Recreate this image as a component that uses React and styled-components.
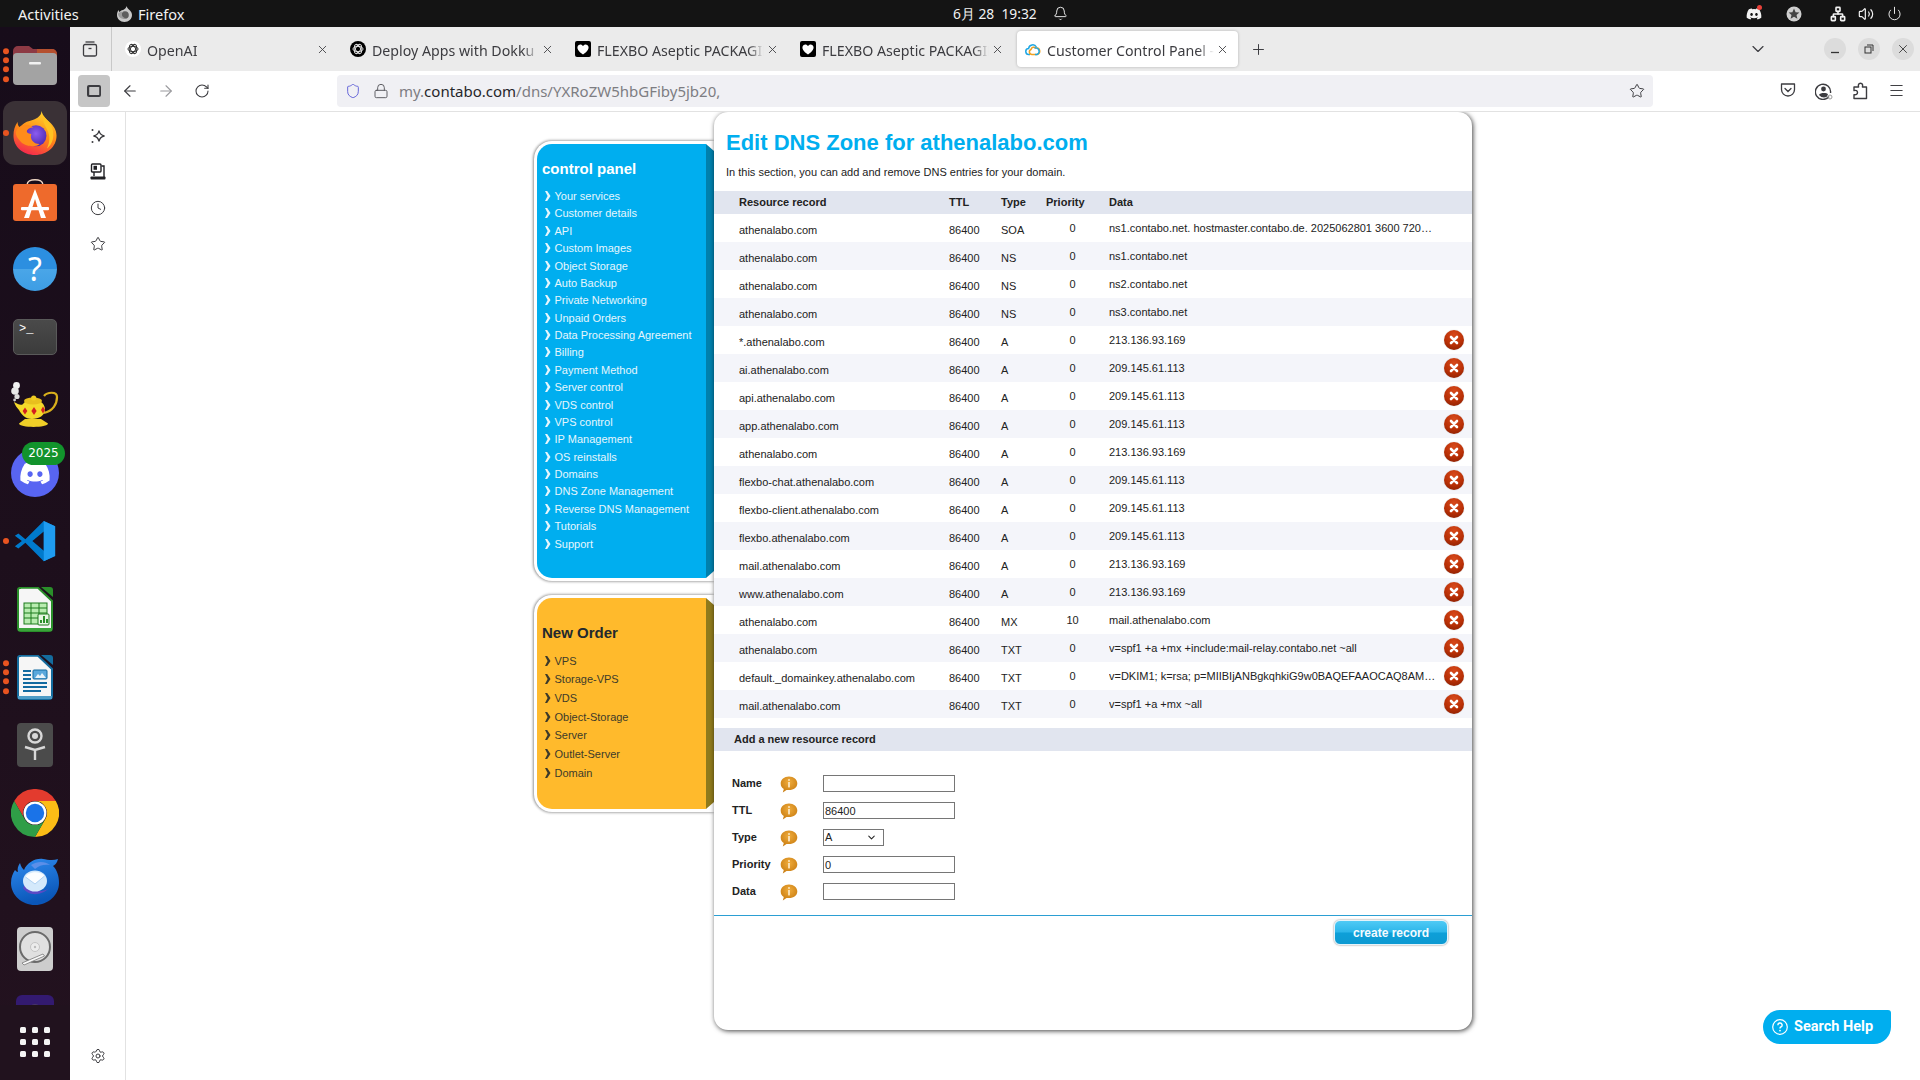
import React from 'react'
import styled, { createGlobalStyle } from 'styled-components'
import {
  ArrowLeft, ArrowRight, RotateCw, Star, Lock, ChevronDown, X, Plus, Menu,
  Clock, Settings, Bell, Power, Volume2, Network, Shield,
} from 'lucide-react'
import { FaDiscord } from 'react-icons/fa'

const SPF = 'v=spf1 +a +mx +include:mail-relay.contabo.net ~all'
const DKIM = 'v=DKIM1; k=rsa; p=MIIBIjANBgkqhkiG9w0BAQEFAAOCAQ8AMIIBCgKCAQEAu5x'
const SOA = 'ns1.contabo.net. hostmaster.contabo.de. 2025062801 3600 7200 1209600 86400'

const RECORDS = [
  ['athenalabo.com', 'SOA', '0', SOA, false],
  ['athenalabo.com', 'NS', '0', 'ns1.contabo.net', false],
  ['athenalabo.com', 'NS', '0', 'ns2.contabo.net', false],
  ['athenalabo.com', 'NS', '0', 'ns3.contabo.net', false],
  ['*.athenalabo.com', 'A', '0', '213.136.93.169', true],
  ['ai.athenalabo.com', 'A', '0', '209.145.61.113', true],
  ['api.athenalabo.com', 'A', '0', '209.145.61.113', true],
  ['app.athenalabo.com', 'A', '0', '209.145.61.113', true],
  ['athenalabo.com', 'A', '0', '213.136.93.169', true],
  ['flexbo-chat.athenalabo.com', 'A', '0', '209.145.61.113', true],
  ['flexbo-client.athenalabo.com', 'A', '0', '209.145.61.113', true],
  ['flexbo.athenalabo.com', 'A', '0', '209.145.61.113', true],
  ['mail.athenalabo.com', 'A', '0', '213.136.93.169', true],
  ['www.athenalabo.com', 'A', '0', '213.136.93.169', true],
  ['athenalabo.com', 'MX', '10', 'mail.athenalabo.com', true],
  ['athenalabo.com', 'TXT', '0', SPF, true],
  ['default._domainkey.athenalabo.com', 'TXT', '0', DKIM, true],
  ['mail.athenalabo.com', 'TXT', '0', 'v=spf1 +a +mx ~all', true],
]

const CONTROL_ITEMS = ['Your services', 'Customer details', 'API', 'Custom Images', 'Object Storage', 'Auto Backup',
  'Private Networking', 'Unpaid Orders', 'Data Processing Agreement', 'Billing', 'Payment Method', 'Server control',
  'VDS control', 'VPS control', 'IP Management', 'OS reinstalls', 'Domains', 'DNS Zone Management',
  'Reverse DNS Management', 'Tutorials', 'Support']
const ORDER_ITEMS = ['VPS', 'Storage-VPS', 'VDS', 'Object-Storage', 'Server', 'Outlet-Server', 'Domain']

const GlobalStyle = createGlobalStyle`
  html, body { margin: 0; padding: 0; height: 100%; overflow: hidden; background: #fff; }
  * { box-sizing: border-box; }
`

const Screen = styled.div`
  width: 1920px;
  height: 1080px;
  display: flex;
  flex-direction: column;
  overflow: hidden;
  font-family: "Liberation Sans", Arial, sans-serif;
  position: relative;
`

/* gnome top bar */
const TopBar = styled.div`
  height: 27px;
  flex-shrink: 0;
  background: #141414;
  color: #f2f2f2;
  display: flex;
  align-items: center;
  font-family: "Noto Sans", sans-serif;
  font-size: 14.6px;
  padding-right: 18px;
`
const BarLeft = styled.div`
  width: 953px;
  display: flex;
  align-items: center;
  padding-left: 18px;
`
const Activities = styled.span`
  width: 99px;
`
const AppName = styled.span`
  margin-left: 6px;
`
const ClockText = styled.span`
  font-size: 13.8px;
  white-space: pre;
`
const BellWrap = styled.span`
  display: flex;
  margin-left: 16px;
`
const Tray = styled.div`
  margin-left: auto;
  display: flex;
  align-items: center;
`
const TrayIcon = styled.span`
  width: 16px;
  height: 16px;
  display: flex;
  align-items: center;
  justify-content: center;
  margin-left: ${p => p.$gap || 0}px;
  position: relative;
`
const TrayDot = styled.span`
  position: absolute;
  top: -1px;
  right: 0;
  width: 5px;
  height: 5px;
  border-radius: 50%;
  background: #e8413a;
`

const Desktop = styled.div`
  flex: 1;
  display: flex;
  min-height: 0;
`

/* ubuntu dock */
const Dock = styled.div`
  width: 70px;
  flex-shrink: 0;
  background: linear-gradient(180deg, #170c1a 0%, #1d0f1c 50%, #23121f 100%);
  display: flex;
  flex-direction: column;
  align-items: center;
  padding-top: 4px;
  overflow: hidden;
  position: relative;
`
const DockItem = styled.div`
  width: 64px;
  flex-shrink: 0;
  display: flex;
  align-items: center;
  justify-content: center;
  border-radius: 12px;
  position: relative;
  background: ${p => (p.$active ? '#3a3136' : 'transparent')};
  margin-top: ${p => (p.$active ? '2px' : '0')};
  margin-bottom: ${p => (p.$active ? '2px' : '0')};
  height: ${p => (p.$active ? '64px' : '68px')};
`
const RunDots = styled.div`
  position: absolute;
  left: 0;
  top: 50%;
  transform: translateY(-50%);
  display: flex;
  flex-direction: column;
  gap: 3.2px;
`
const RunDot = styled.span`
  width: 6px;
  height: 6px;
  border-radius: 50%;
  background: #e95420;
`
const HelpBadge = styled.div`
  width: 44px;
  height: 44px;
  border-radius: 50%;
  background: linear-gradient(180deg, #2c8fe0 0%, #2c8fe0 50%, #4aa6e8 50%, #3d9de4 100%);
  color: #fff;
  font-family: "Noto Sans", sans-serif;
  font-size: 32px;
  line-height: 44px;
  text-align: center;
`
const TerminalTile = styled.div`
  width: 44px;
  height: 36px;
  border-radius: 5px;
  background: linear-gradient(180deg, #4a4a4a, #3b3b3b);
  border: 1px solid #5a5a5a;
  color: #fff;
  font-family: "Liberation Mono", monospace;
  font-size: 12px;
  line-height: 14px;
  padding: 2px 0 0 5px;
`
const DiscordDisc = styled.div`
  width: 48px;
  height: 48px;
  border-radius: 50%;
  background: #5865f2;
  color: #fff;
  display: flex;
  align-items: center;
  justify-content: center;
  position: relative;
`
const YearBadge = styled.span`
  position: absolute;
  left: 11px;
  top: -7px;
  width: 43px;
  height: 23px;
  border-radius: 12px;
  background: #12932c;
  color: #fff;
  font-family: "DejaVu Sans", sans-serif;
  font-size: 12px;
  line-height: 23px;
  text-align: center;
`
const AppsGrid = styled.div`
  position: absolute;
  left: 0;
  bottom: 0;
  width: 70px;
  height: 75px;
  background: #21121e;
  display: grid;
  grid-template-columns: repeat(3, 6px);
  grid-auto-rows: 6px;
  gap: 6px;
  justify-content: center;
  padding-top: 22px;
`
const AppsDot = styled.span`
  border-radius: 1.5px;
  background: #f4f4f4;
`

/* firefox window */
const Browser = styled.div`
  flex: 1;
  display: flex;
  flex-direction: column;
  min-width: 0;
`
const TabStrip = styled.div`
  height: 44px;
  flex-shrink: 0;
  background: #ebebeb;
  display: flex;
  align-items: center;
  color: #3c3c40;
  font-family: "Noto Sans", sans-serif;
  font-size: 14.2px;
`
const ViewButton = styled.div`
  width: 42px;
  height: 44px;
  display: flex;
  align-items: center;
  justify-content: center;
  padding-right: 2px;
  border-right: 1px solid #c8c8c8;
  flex-shrink: 0;
`
const TabList = styled.div`
  display: flex;
  gap: 4px;
  margin-left: 5px;
`
const Tab = styled.div`
  width: 221px;
  height: 36px;
  display: flex;
  align-items: center;
  padding: 0 8px;
  border-radius: 4px;
  background: ${p => (p.$active ? '#fff' : 'transparent')};
  box-shadow: ${p => (p.$active ? '0 0 3px rgba(0,0,0,.25)' : 'none')};
`
const Favicon = styled.span`
  width: 16px;
  height: 16px;
  display: flex;
  flex-shrink: 0;
`
const TabTitle = styled.span`
  flex: 1;
  margin-left: 6px;
  padding-top: 2px;
  white-space: nowrap;
  overflow: hidden;
  -webkit-mask-image: linear-gradient(90deg, #000 calc(100% - 16px), transparent);
  mask-image: linear-gradient(90deg, #000 calc(100% - 16px), transparent);
`
const TabClose = styled.span`
  width: 16px;
  display: flex;
  justify-content: center;
  flex-shrink: 0;
`
const NewTab = styled.span`
  margin-left: 12px;
  display: flex;
`
const TabsMenu = styled.span`
  margin-left: auto;
  display: flex;
`
const WindowButtons = styled.div`
  display: flex;
  gap: 12px;
  margin-left: 56px;
  margin-right: 6px;
`
const WindowButton = styled.span`
  width: 22px;
  height: 22px;
  border-radius: 50%;
  background: #dcdcdc;
  display: flex;
  align-items: center;
  justify-content: center;
`

const Toolbar = styled.div`
  height: 41px;
  flex-shrink: 0;
  background: #fff;
  border-bottom: 1px solid #e2e2e2;
  display: flex;
  align-items: center;
  padding: 0 6px 1px 8px;
  color: #404044;
`
const SidebarToggle = styled.div`
  width: 32px;
  height: 32px;
  border-radius: 4px;
  background: #c6c6c6;
  display: flex;
  align-items: center;
  justify-content: center;
  margin-right: 2px;
`
const NavButton = styled.span`
  width: 36px;
  display: flex;
  justify-content: center;
  color: ${p => (p.$disabled ? '#9a9a9e' : '#3c3c40')};
`
const UrlBar = styled.div`
  width: 1316px;
  height: 32px;
  margin-left: 117px;
  background: #f0f0f4;
  border-radius: 4px;
  display: flex;
  align-items: center;
  padding: 0 8px;
  font-family: "Noto Sans", sans-serif;
  font-size: 15px;
`
const UrlIcon = styled.span`
  width: 16px;
  display: flex;
  justify-content: center;
  margin-right: ${p => p.$gap}px;
`
const UrlText = styled.span`
  color: #7d7d82;
`
const UrlHost = styled.span`
  color: #26262a;
`
const UrlStar = styled.span`
  margin-left: auto;
  display: flex;
`
const ToolActions = styled.div`
  margin-left: auto;
  display: flex;
`
const ToolAction = styled.span`
  width: 36px;
  display: flex;
  justify-content: center;
`

const BrowserBody = styled.div`
  flex: 1;
  display: flex;
  min-height: 0;
`
const SidePanel = styled.div`
  width: 56px;
  flex-shrink: 0;
  border-right: 1px solid #e2e2e2;
  display: flex;
  flex-direction: column;
  align-items: center;
  padding: 6px 0;
  color: #3c3c40;
`
const SideIcon = styled.span`
  height: 36px;
  display: flex;
  align-items: center;
  margin-top: ${p => (p.$bottom ? 'auto' : '0')};
`

/* contabo page */
const Page = styled.div`
  flex: 1;
  display: flex;
  overflow: hidden;
  padding-left: 408px;
  position: relative;
`
const LeftColumn = styled.div`
  width: 180px;
  flex-shrink: 0;
  padding-top: 29px;
`
const Panel = styled.div`
  height: ${p => p.$height}px;
  margin-bottom: 14px;
  display: flex;
  border: 3px solid #fff;
  border-right: 0;
  border-radius: 18px 0 0 18px;
  box-shadow: -1px 0 3px rgba(0, 0, 0, .28), 0 -1px 3px rgba(0, 0, 0, .18), 0 1px 3px rgba(0, 0, 0, .18);
  background: #fff;
`
const PanelBody = styled.div`
  flex: 1;
  background: ${p => p.$bg};
  color: ${p => p.$color};
  border-radius: 15px 0 0 15px;
  padding: ${p => p.$top}px 0 0 5px;
  font-size: 11px;
`
const PanelStrip = styled.div`
  width: 8px;
  background: ${p => p.$bg};
  clip-path: polygon(0 0, 100% 7px, 100% calc(100% - 7px), 0 100%);
`
const PanelTitle = styled.div`
  font-size: 15px;
  font-weight: bold;
  line-height: 18px;
  color: ${p => p.$color};
  margin-bottom: 9.4px;
`
const MenuItem = styled.div`
  height: ${p => p.$pitch}px;
  display: flex;
  align-items: center;
  gap: 4px;
  padding-left: 3px;
  white-space: nowrap;
`

const MainCard = styled.div`
  width: 758px;
  height: 918px;
  flex-shrink: 0;
  background: #fff;
  border-radius: 14px;
  box-shadow: 1px 1px 5px rgba(0, 0, 0, .75);
  padding-top: 18px;
  position: relative;
  color: #222;
  font-size: 11px;
`
const Heading = styled.h1`
  margin: 0 0 0 12px;
  font-size: 22px;
  line-height: 26px;
  font-weight: bold;
  color: #00aeef;
`
const Intro = styled.p`
  margin: 9px 0 12px 12px;
  font-size: 11px;
  line-height: 14px;
`
const RowGrid = styled.div`
  height: ${p => p.$height}px;
  display: grid;
  grid-template-columns: 235px 52px 45px 63px 327px 36px;
  align-items: center;
  background: ${p => p.$bg};
`
const HeadCell = styled.div`
  font-weight: bold;
  padding-left: ${p => p.$pad || 0}px;
  padding-bottom: 2px;
`
const NameCell = styled.div`
  padding-top: 4px;
  padding-left: ${p => p.$pad || 0}px;
  white-space: nowrap;
`
const PriorityCell = styled.div`
  text-align: center;
  padding-right: 10px;
`
const DataCell = styled.div`
  white-space: nowrap;
  overflow: hidden;
  text-overflow: ellipsis;
`
const DeleteBall = styled.span`
  width: 20px;
  height: 20px;
  border-radius: 50%;
  background: radial-gradient(circle at 50% 25%, #d84a1c 0%, #b93006 55%, #7e1c02 100%);
  display: flex;
  align-items: center;
  justify-content: center;
  justify-self: center;
  box-shadow: 0 0 1px rgba(0,0,0,.3);
`
const AddHeader = styled.div`
  height: 23px;
  margin-top: 10px;
  background: #e1e5ef;
  font-weight: bold;
  line-height: 23px;
  padding-left: 20px;
`
const RecordForm = styled.form`
  margin-top: 24px;
  display: flex;
  flex-direction: column;
  gap: 10px;
  padding-left: 18px;
`
const FormRow = styled.div`
  height: 17px;
  display: flex;
  align-items: center;
`
const FormLabel = styled.label`
  width: 48px;
  font-weight: bold;
  padding-bottom: 2px;
`
const InfoSlot = styled.span`
  width: 43px;
  display: flex;
  padding-top: 1px;
`
const TextInput = styled.input`
  width: 132px;
  height: 17px;
  border: 1px solid #767676;
  border-radius: 0;
  padding: 0 1px;
  font: 11px "Liberation Sans", Arial, sans-serif;
  color: #222;
  background: #fff;
  outline: 0;
`
const TypeSelect = styled.div`
  width: 61px;
  height: 17px;
  border: 1px solid #767676;
  padding: 0 6px 0 1px;
  line-height: 15px;
  display: flex;
  align-items: center;
  justify-content: space-between;
`
const Divider = styled.div`
  height: 1px;
  margin-top: 15px;
  background: #2b9fd3;
`
const ButtonRow = styled.div`
  display: flex;
  justify-content: flex-end;
  padding: 4px 24px 0 0;
`
const CreateButton = styled.button`
  width: 114px;
  height: 25px;
  border: 1px solid #e4f3fa;
  border-radius: 6px;
  background: linear-gradient(180deg, #4fcaf5 0%, #2cb6ea 48%, #0d9fd8 52%, #0d9ad2 100%);
  box-shadow: 0 0 2px rgba(0, 0, 0, .55);
  color: #f4fbff;
  font: bold 12px "Liberation Sans", Arial, sans-serif;
  padding: 1px 0 0;
`
const SearchHelp = styled.div`
  position: absolute;
  right: 29px;
  bottom: 36px;
  width: 128px;
  height: 34px;
  border-radius: 17px 3px 17px 17px;
  background: #00aeef;
  color: #fff;
  font-family: Roboto, sans-serif;
  font-weight: 700;
  font-size: 14.5px;
  display: flex;
  align-items: center;
  gap: 6px;
  padding: 0 0 1px 9px;
`

/* drawings */
const Chevron = () => (
  <svg width="5.5" height="10" viewBox="0 0 5.5 10" style={{ flexShrink: 0 }}>
    <polygon points="0,0 2.2,0 5.5,5 2.2,10 0,10 2.6,5" fill="currentColor" />
  </svg>
)

const DeleteX = () => (
  <svg width="10" height="10" viewBox="0 0 10 10">
    <path d="M2 2 L8 8 M8 2 L2 8" stroke="#fff" strokeWidth="2.6" strokeLinecap="round" />
  </svg>
)

const InfoBubble = () => (
  <svg width="18" height="17" viewBox="0 0 18 17">
    <defs>
      <radialGradient id="infoFill" cx="50%" cy="35%" r="65%">
        <stop offset="0" stopColor="#f0ac3c" />
        <stop offset="1" stopColor="#c97d12" />
      </radialGradient>
    </defs>
    <path d="M9 0.5 C13.8 0.5 17.3 3.4 17.3 7.4 C17.3 11.2 13.8 14 9 14 L6.5 14 L2.8 16.6 L3.8 13 C1.8 11.8 0.7 9.8 0.7 7.4 C0.7 3.4 4.2 0.5 9 0.5Z" fill="url(#infoFill)" />
    <circle cx="9" cy="4" r="1" fill="#fbe6c0" />
    <rect x="8.1" y="6" width="1.8" height="5.4" fill="#fbe6c0" />
  </svg>
)

const FilesIcon = () => (
  <svg width="44" height="40" viewBox="0 0 44 40">
    <path d="M0 6 a5 5 0 0 1 5-5 h11 l4 3 h19 a5 5 0 0 1 5 5 v6 H0z" fill="#8d3a44" />
    <path d="M24 4 h15 a5 5 0 0 1 5 5 v6 H24z" fill="#b5502f" />
    <rect x="0" y="8" width="44" height="32" rx="4" fill="#a3a3a3" />
    <rect x="16" y="17" width="12" height="2.4" rx="1" fill="#f2f2f2" />
  </svg>
)

const FirefoxIcon = () => (
  <svg width="44" height="44" viewBox="0 0 48 48">
    <defs>
      <linearGradient id="ffa" x1="0.7" y1="0" x2="0.3" y2="1">
        <stop offset="0" stopColor="#ffd52e" />
        <stop offset="0.5" stopColor="#ff8a16" />
        <stop offset="1" stopColor="#f4254f" />
      </linearGradient>
      <radialGradient id="ffb" cx="50%" cy="40%" r="60%">
        <stop offset="0" stopColor="#8b5cf0" />
        <stop offset="1" stopColor="#4f2ab0" />
      </radialGradient>
    </defs>
    <path d="M31 0 C33 6 36 9 41 13 C46 18 47.5 23 47.5 27 C47.5 39 37 48 24 48 C11 48 0.5 39 0.5 27 C0.5 21 2 16 5 12 C5 15 6 17 8 18 C10 14 14 12 18 11 C25 9 31 6 31 0Z" fill="url(#ffa)" />
    <circle cx="25" cy="27" r="11.5" fill="url(#ffb)" />
    <path d="M3 23 C5 18 9 15 14 15 C17 15 20 16 22 18 C18 18 15 20 15 22 C15 24 18 25 20 25 C18 30 22 36 29 36 C25 40 13 39 8 33 C5 30 3 27 3 23Z" fill="#ff8c1a" />
    <path d="M33 5 C38 11 44 15 44 26 C44 33 41 38 37 41 C40 35 41 27 37 20 C34 15 32 10 33 5Z" fill="#ffc222" />
  </svg>
)

const FirefoxGrey = () => (
  <svg width="15" height="16" viewBox="0 0 15 16">
    <path d="M9.5 0 C10 2 11.5 3 13 4.5 C14.5 6 15 7.5 15 9 C15 13 11.7 16 7.5 16 C3.3 16 0 13 0 9 C0 7 .6 5.4 1.6 4 C1.7 5 2 5.6 2.6 6 C3.6 4 6 4 7 3.4 C8.4 2.6 9.4 1.6 9.5 0Z" fill="#c9c9c9" />
    <circle cx="8" cy="9" r="3.8" fill="#5e5e5e" />
    <path d="M1 8 C2 6 4.4 5 6.6 6.2 C5 6.4 4.6 7.4 5 8 C4.6 10.4 6.8 12.4 9.6 12 C7.6 13.6 1.6 13 1 8Z" fill="#9c9c9c" />
  </svg>
)

const AppCenterIcon = () => (
  <svg width="44" height="47" viewBox="0 0 44 47">
    <path d="M14 7 C14 0 30 0 30 7" fill="none" stroke="#f1d8c5" strokeWidth="1.6" />
    <rect x="0" y="6" width="44" height="37" rx="3" fill="#ee6a2c" />
    <path d="M22 11 L33 40 H28 L22 21 L16 40 H11 Z" fill="#fff" />
    <rect x="8" y="29" width="28" height="3.2" rx="1" fill="#fff" />
  </svg>
)

const LampIcon = () => (
  <svg width="48" height="46" viewBox="0 0 48 46">
    <circle cx="5.5" cy="3.5" r="3.4" fill="#f3f3f3" />
    <circle cx="4" cy="9" r="3.8" fill="#e8e8e8" />
    <circle cx="6" cy="14.5" r="2.6" fill="#dcdcdc" />
    <circle cx="3.6" cy="18" r="1.4" fill="#d0d0d0" />
    <path d="M33 14 C36 10 46 9 46 15 C46 22 42 29 33 31" fill="none" stroke="#d9b01c" strokeWidth="2.2" />
    <path d="M3 20 C7 22 10 24 12 22 C14 19 18 18 22 18 C30 18 34 22 34 28 C34 33 28 37 21 37 C14 37 10 32 8 28 C6 26 4 23 3 20Z" fill="#f5d92a" />
    <ellipse cx="22" cy="19" rx="9" ry="3.4" fill="#e8c01e" />
    <circle cx="22.7" cy="16" r="2.6" fill="#f0cc22" />
    <path d="M14 37 H30 L37 41.5 C37 46 8 46 8 41.5Z" fill="#efce28" />
    <polygon points="14,25.5 16.4,29 14,32.5 11.6,29" fill="#d42020" />
    <polygon points="23,25 25.6,29 23,33 20.4,29" fill="#d42020" />
    <polygon points="32,24.5 34,28 32,31.5 30,28" fill="#d42020" />
  </svg>
)

const VsCodeIcon = () => (
  <svg width="42" height="42" viewBox="0 0 48 48">
    <path d="M34 1 L13 22 L5 15.5 L1 18 L9 24 L1 30 L5 32.5 L13 26 L34 47 L47 41 V7 Z M34 13 L21 24 L34 35 Z" fillRule="evenodd" fill="#007acc" />
    <path d="M34 1 L47 7 V41 L34 47 Z" fill="#1f9cf0" />
  </svg>
)

const OfficeDoc = ({ color, light, children }) => (
  <svg width="36" height="45" viewBox="0 0 36 45">
    <path d="M24 0 H33 a3 3 0 0 1 3 3 V10Z" fill={color} />
    <path d="M3 0.8 H21 L35 14 V41 a3 3 0 0 1-3 3 H4 a3 3 0 0 1-3-3 V3 a2 2 0 0 1 2-2Z" fill="#f6f6f6" stroke={color} strokeWidth="2" />
    <rect x="1" y="41" width="34" height="3" fill={light} />
    {children}
  </svg>
)

const CalcIcon = () => (
  <OfficeDoc color="#2a8f2a" light="#3aa33a">
    <rect x="7" y="16" width="23" height="21" fill="#b9ecb0" stroke="#1c7a1c" strokeWidth="1" />
    <path d="M7 21 H30 M7 26 H30 M7 31 H30 M14 16 V37 M22 16 V37" stroke="#1c7a1c" strokeWidth="1" />
    <rect x="21" y="27" width="11" height="11" rx="1" fill="#e8f6e4" stroke="#1c7a1c" />
    <path d="M24 36 V33 M27 36 V29 M30 36 V32" stroke="#2a8f2a" strokeWidth="2" />
  </OfficeDoc>
)

const WriterIcon = () => (
  <OfficeDoc color="#146c9e" light="#4d9cc6">
    <path d="M6 16 H14 M6 20 H14 M6 24 H14 M6 28 H30 M6 32 H30 M6 36 H24" stroke="#126aa0" strokeWidth="1.8" />
    <rect x="16" y="15" width="14" height="9" rx="1" fill="#5aa8dc" stroke="#126aa0" />
    <path d="M18 23 L21 19 L23 21 L25 18 L29 23Z" fill="#e8f3fa" />
  </OfficeDoc>
)

const TileIcon = () => (
  <svg width="36" height="44" viewBox="0 0 36 44">
    <rect width="36" height="44" rx="4" fill="#4b4b4b" />
    <circle cx="18" cy="13" r="6.5" fill="none" stroke="#d8d8d8" strokeWidth="2.4" />
    <circle cx="18" cy="13" r="3" fill="#d8d8d8" />
    <path d="M8 24 L18 27 L28 24 M18 27 V37" fill="none" stroke="#d8d8d8" strokeWidth="2.4" />
  </svg>
)

const ChromeIcon = () => (
  <svg width="48" height="48" viewBox="0 0 48 48">
    <path d="M24 12 H44.8 A24 24 0 0 0 3.2 12 L13.6 30 A12 12 0 0 1 24 12Z" fill="#e33b2e" />
    <path d="M44.8 12 A24 24 0 0 1 24 48 L34.4 30 A12 12 0 0 0 24 12Z" fill="#fbbc16" />
    <path d="M24 48 A24 24 0 0 1 3.2 12 L13.6 30 A12 12 0 0 0 34.4 30Z" fill="#2f9e47" />
    <circle cx="24" cy="24" r="11.5" fill="#fff" />
    <circle cx="24" cy="24" r="9.2" fill="#1a73e8" />
  </svg>
)

const ThunderbirdIcon = () => (
  <svg width="48" height="47" viewBox="0 0 48 47">
    <defs>
      <linearGradient id="tbFill" x1="0" y1="0" x2="0.3" y2="1">
        <stop offset="0" stopColor="#2f8cf0" />
        <stop offset="1" stopColor="#0a56b8" />
      </linearGradient>
    </defs>
    <path d="M9 5 C10 9 12 11 13 12 C16 5 24 0 32 1 C36 1.6 42 3 47 1 C46 5 44 7 42 8 C46 12 48 18 48 25 C48 37 37 47 24 47 C11 47 0 37 0 25 C0 19 2 15 4 12 C5 13 6 14 7 14 C6 11 7 8 9 5Z" fill="url(#tbFill)" />
    <path d="M20 7 C26 3 34 3 39 7 C34 6 28 7 24 11Z" fill="#5c8fe8" />
    <path d="M12 30 C16 37 30 40 40 28 C36 34 22 36 14 26Z" fill="#5b4ac4" />
    <ellipse cx="24" cy="23" rx="12" ry="10.5" fill="#d4e9fb" />
    <path d="M14.5 19 L24 26 L33.5 18 C30 13 18 13 14.5 19Z" fill="#fbfdff" />
    <path d="M14.5 19 L24 26 L33.5 18" fill="none" stroke="#a9cdf0" strokeWidth=".9" />
  </svg>
)

const DiskIcon = () => (
  <svg width="36" height="44" viewBox="0 0 36 44">
    <rect width="36" height="44" rx="4" fill="#cdcdcd" />
    <circle cx="18" cy="20" r="15" fill="#e0e0e0" stroke="#6a6a6a" strokeWidth="2" />
    <circle cx="18" cy="20" r="4.5" fill="#ececec" stroke="#c4c4c4" />
    <circle cx="18" cy="20" r="1.2" fill="#bbb" />
    <path d="M5 36 L26 27 L27.5 29 L7 38Z" fill="#f8f8f8" stroke="#777" strokeWidth=".8" />
  </svg>
)

const PurpleTile = () => (
  <svg width="38" height="44" viewBox="0 0 38 44">
    <rect width="38" height="44" rx="6" fill="#331a70" />
    <path d="M9 22 A10 10 0 0 1 29 22" fill="none" stroke="#5c5360" strokeWidth="5" />
  </svg>
)

const OpenAiMark = ({ bg, fg }) => (
  <svg width="16" height="16" viewBox="0 0 16 16">
    <circle cx="8" cy="8" r="8" fill={bg} />
    <g fill="none" stroke={fg} strokeWidth="1">
      <ellipse cx="8" cy="8" rx="5" ry="2.6" />
      <ellipse cx="8" cy="8" rx="5" ry="2.6" transform="rotate(60 8 8)" />
      <ellipse cx="8" cy="8" rx="5" ry="2.6" transform="rotate(120 8 8)" />
    </g>
  </svg>
)

const HeartMark = () => (
  <svg width="16" height="16" viewBox="0 0 16 16">
    <rect width="16" height="16" rx="2" fill="#000" />
    <path d="M8 13.4 C3 10 2 7.6 2.6 5.4 C3.4 3 6.6 2.6 8 5 C9.4 2.6 12.6 3 13.4 5.4 C14 7.6 13 10 8 13.4Z" fill="#fff" />
  </svg>
)

const CloudMark = () => (
  <svg width="16" height="16" viewBox="0 0 16 16" fill="none">
    <path d="M5 13.5 H4 A3 3 0 0 1 3.6 7.5 A4.2 4.2 0 0 1 11.4 6" stroke="#1ea7e4" strokeWidth="1.5" />
    <path d="M6 8.5 A3 3 0 0 1 11 7 A3.2 3.2 0 0 1 12 13.5 H7 A2.6 2.6 0 0 1 6 8.5Z" stroke="#f0a020" strokeWidth="1.5" />
    <path d="M9.5 7.2 A3 3 0 0 1 12 13.5 H10" stroke="#1ea7e4" strokeWidth="1.5" />
  </svg>
)

const ViewIcon = () => (
  <svg width="16" height="16" viewBox="0 0 16 16" fill="none" stroke="#3c3c40" strokeWidth="1.3">
    <path d="M3.5 1 H12.5" />
    <rect x="1.5" y="3.5" width="13" height="11.5" rx="1.5" />
    <path d="M6.5 7.5 H9.5" />
  </svg>
)

const SidebarGlyph = () => (
  <svg width="16" height="16" viewBox="0 0 16 16">
    <rect x="1" y="2" width="14" height="12" rx="2" fill="#3c3c40" />
    <rect x="3.2" y="4" width="10" height="8" rx=".6" fill="#c6c6c6" />
  </svg>
)

const SparkleGlyph = () => (
  <svg width="18" height="18" viewBox="0 0 18 18" fill="none" stroke="#3c3c40" strokeWidth="1.4">
    <path d="M10 3.5 C10.6 7 12 8.4 15.5 9 C12 9.6 10.6 11 10 14.5 C9.4 11 8 9.6 4.5 9 C8 8.4 9.4 7 10 3.5Z" />
    <circle cx="3.5" cy="3" r="1" fill="#3c3c40" stroke="none" />
    <circle cx="3.5" cy="15" r="1" fill="#3c3c40" stroke="none" />
  </svg>
)

const SyncedGlyph = () => (
  <svg width="18" height="18" viewBox="0 0 18 18" fill="none" stroke="#202024" strokeWidth="1.4">
    <rect x="2.5" y="1" width="9.5" height="8" rx="1" />
    <rect x="4.5" y="2.8" width="3.5" height="4" fill="#202024" stroke="none" />
    <path d="M12.5 3 H15 V14" />
    <path d="M5 9 V13" />
    <rect x="1.5" y="13.5" width="15" height="3" rx=".8" fill="#202024" stroke="none" />
  </svg>
)

const PocketGlyph = () => (
  <svg width="16" height="16" viewBox="0 0 16 16" fill="none" stroke="#3c3c40" strokeWidth="1.3">
    <path d="M1.5 2 H14.5 V7.5 A6.5 6.5 0 0 1 1.5 7.5Z" strokeLinejoin="round" />
    <path d="M5 6.5 L8 9.5 L11 6.5" strokeLinecap="round" />
  </svg>
)

const AccountGlyph = () => (
  <svg width="18" height="18" viewBox="0 0 18 18" fill="none">
    <path d="M14 14.5 A7.6 7.6 0 1 1 15.5 11" stroke="#3c3c40" strokeWidth="1.4" />
    <circle cx="8.5" cy="7" r="2.4" fill="#3c3c40" />
    <path d="M4 13 C5 10.5 12 10.5 13 12.5 L11.5 15 C9 16 6 15.5 4 13Z" fill="#3c3c40" />
    <circle cx="15" cy="15" r="2" stroke="#9c9c9c" strokeWidth="1" />
  </svg>
)

const PuzzleGlyph = () => (
  <svg width="18" height="18" viewBox="0 0 18 18" fill="none" stroke="#3c3c40" strokeWidth="1.4" strokeLinejoin="round">
    <path d="M9.5 1.2 C11.5 1.2 12 3 11.4 5 H15.5 V16.5 H3 V12.6 C5 13 6.5 12.3 6.5 10.5 C6.5 8.7 5 8 3 8.5 V5 H7.6 C7 3 7.5 1.2 9.5 1.2Z" />
  </svg>
)

const BadgeStar = () => (
  <svg width="16" height="16" viewBox="0 0 16 16">
    <circle cx="8" cy="8" r="7.5" fill="#cfcfcf" />
    <polygon points="8,2.6 9.6,6.2 13.4,6.5 10.5,9 11.4,12.8 8,10.8 4.6,12.8 5.5,9 2.6,6.5 6.4,6.2" fill="#444" />
  </svg>
)

const DOCK = [
  { icon: <FilesIcon />, dots: 4 },
  { icon: <FirefoxIcon />, dots: 1, active: true },
  { icon: <AppCenterIcon /> },
  { icon: <HelpBadge>?</HelpBadge> },
  { icon: <TerminalTile>&gt;_</TerminalTile> },
  { icon: <LampIcon /> },
  { icon: <DiscordDisc><YearBadge>2025</YearBadge><FaDiscord size={32} /></DiscordDisc> },
  { icon: <VsCodeIcon />, dots: 1 },
  { icon: <CalcIcon /> },
  { icon: <WriterIcon />, dots: 4 },
  { icon: <TileIcon /> },
  { icon: <ChromeIcon /> },
  { icon: <ThunderbirdIcon /> },
  { icon: <DiskIcon /> },
  { icon: <PurpleTile /> },
]

const TABS = [
  { title: 'OpenAI', icon: <OpenAiMark bg="#fff" fg="#333" /> },
  { title: 'Deploy Apps with Dokku', icon: <OpenAiMark bg="#000" fg="#ddd" /> },
  { title: 'FLEXBO Aseptic PACKAGING MACHINE', icon: <HeartMark /> },
  { title: 'FLEXBO Aseptic PACKAGING MACHINE', icon: <HeartMark /> },
  { title: 'Customer Control Panel - Contabo', icon: <CloudMark />, active: true },
]

function MenuPanel({ height, bg, strip, color, titleColor, top, title, items, pitch }) {
  return (
    <Panel $height={height}>
      <PanelBody $bg={bg} $color={color} $top={top}>
        <PanelTitle $color={titleColor}>{title}</PanelTitle>
        {items.map(item => (
          <MenuItem key={item} $pitch={pitch}><Chevron />{item}</MenuItem>
        ))}
      </PanelBody>
      <PanelStrip $bg={strip} />
    </Panel>
  )
}

export default function App() {
  return (
    <Screen>
      <GlobalStyle />
      <TopBar>
        <BarLeft>
          <Activities>Activities</Activities>
          <FirefoxGrey />
          <AppName>Firefox</AppName>
        </BarLeft>
        <ClockText>6月 28  19:32</ClockText>
        <BellWrap><Bell size={15} strokeWidth={1.5} /></BellWrap>
        <Tray>
          <TrayIcon><FaDiscord size={16} /><TrayDot /></TrayIcon>
          <TrayIcon $gap={24}><BadgeStar /></TrayIcon>
          <TrayIcon $gap={28}><Network size={16} strokeWidth={2.4} /></TrayIcon>
          <TrayIcon $gap={12}><Volume2 size={16} strokeWidth={1.8} /></TrayIcon>
          <TrayIcon $gap={12}><Power size={15} strokeWidth={1.5} /></TrayIcon>
        </Tray>
      </TopBar>
      <Desktop>
        <Dock>
          {DOCK.map((entry, key) => (
            <DockItem key={key} $active={entry.active}>
              {entry.dots && (
                <RunDots>
                  {Array.from({ length: entry.dots }).map((_, i) => <RunDot key={i} />)}
                </RunDots>
              )}
              {entry.icon}
            </DockItem>
          ))}
          <AppsGrid>
            {Array.from({ length: 9 }).map((_, i) => <AppsDot key={i} />)}
          </AppsGrid>
        </Dock>
        <Browser>
          <TabStrip>
            <ViewButton><ViewIcon /></ViewButton>
            <TabList>
              {TABS.map((tab, key) => (
                <Tab key={key} $active={tab.active}>
                  <Favicon>{tab.icon}</Favicon>
                  <TabTitle>{tab.title}</TabTitle>
                  <TabClose><X size={13} strokeWidth={1.6} /></TabClose>
                </Tab>
              ))}
            </TabList>
            <NewTab><Plus size={17} strokeWidth={1.4} /></NewTab>
            <TabsMenu><ChevronDown size={20} strokeWidth={1.4} /></TabsMenu>
            <WindowButtons>
              <WindowButton>
                <svg width="10" height="10" viewBox="0 0 10 10"><path d="M1 8.5 H9" stroke="#333" strokeWidth="1.3" /></svg>
              </WindowButton>
              <WindowButton>
                <svg width="10" height="10" viewBox="0 0 10 10" fill="none" stroke="#333"><rect x="1" y="3" width="6" height="6" /><path d="M3 1 H9 V7" /></svg>
              </WindowButton>
              <WindowButton><X size={14} strokeWidth={1.5} color="#333" /></WindowButton>
            </WindowButtons>
          </TabStrip>
          <Toolbar>
            <SidebarToggle><SidebarGlyph /></SidebarToggle>
            <NavButton><ArrowLeft size={18} strokeWidth={1.5} /></NavButton>
            <NavButton $disabled><ArrowRight size={18} strokeWidth={1.5} /></NavButton>
            <NavButton><RotateCw size={16} strokeWidth={1.6} /></NavButton>
            <UrlBar>
              <UrlIcon $gap={12}><Shield size={16} strokeWidth={1.4} color="#5b5bd6" /></UrlIcon>
              <UrlIcon $gap={10}><Lock size={16} strokeWidth={1.4} color="#55555a" /></UrlIcon>
              <UrlText>my.<UrlHost>contabo.com</UrlHost>/dns/YXRoZW5hbGFiby5jb20,</UrlText>
              <UrlStar><Star size={16} strokeWidth={1.5} /></UrlStar>
            </UrlBar>
            <ToolActions>
              <ToolAction><PocketGlyph /></ToolAction>
              <ToolAction><AccountGlyph /></ToolAction>
              <ToolAction><PuzzleGlyph /></ToolAction>
              <ToolAction><Menu size={17} strokeWidth={1.5} /></ToolAction>
            </ToolActions>
          </Toolbar>
          <BrowserBody>
            <SidePanel>
              <SideIcon><SparkleGlyph /></SideIcon>
              <SideIcon><SyncedGlyph /></SideIcon>
              <SideIcon><Clock size={16} strokeWidth={1.5} /></SideIcon>
              <SideIcon><Star size={16} strokeWidth={1.5} /></SideIcon>
              <SideIcon $bottom><Settings size={16} strokeWidth={1.5} /></SideIcon>
            </SidePanel>
            <Page>
              <LeftColumn>
                <MenuPanel height={440} bg="#00aeef" strip="#0080ad" color="#e6f6fd" titleColor="#fff"
                  top={16} title="control panel" items={CONTROL_ITEMS} pitch={17.38} />
                <MenuPanel height={217} bg="#ffba2c" strip="#8f7a1c" color="#3d3a2a" titleColor="#22292e"
                  top={26} title="New Order" items={ORDER_ITEMS} pitch={18.67} />
              </LeftColumn>
              <MainCard>
                <Heading>Edit DNS Zone for athenalabo.com</Heading>
                <Intro>In this section, you can add and remove DNS entries for your domain.</Intro>
                <RowGrid $height={23} $bg="#e1e5ef">
                  <HeadCell $pad={25}>Resource record</HeadCell>
                  <HeadCell>TTL</HeadCell>
                  <HeadCell>Type</HeadCell>
                  <HeadCell>Priority</HeadCell>
                  <HeadCell>Data</HeadCell>
                </RowGrid>
                {RECORDS.map(([name, type, priority, data, removable], key) => (
                  <RowGrid key={key} $height={28} $bg={key % 2 ? '#f4f5fa' : '#fff'}>
                    <NameCell $pad={25}>{name}</NameCell>
                    <NameCell>86400</NameCell>
                    <NameCell>{type}</NameCell>
                    <PriorityCell>{priority}</PriorityCell>
                    <DataCell>{data}</DataCell>
                    {removable && <DeleteBall><DeleteX /></DeleteBall>}
                  </RowGrid>
                ))}
                <AddHeader>Add a new resource record</AddHeader>
                <RecordForm>
                  <FormRow><FormLabel>Name</FormLabel><InfoSlot><InfoBubble /></InfoSlot><TextInput defaultValue="" /></FormRow>
                  <FormRow><FormLabel>TTL</FormLabel><InfoSlot><InfoBubble /></InfoSlot><TextInput defaultValue="86400" /></FormRow>
                  <FormRow>
                    <FormLabel>Type</FormLabel>
                    <InfoSlot><InfoBubble /></InfoSlot>
                    <TypeSelect>A<ChevronDown size={11} strokeWidth={2.2} /></TypeSelect>
                  </FormRow>
                  <FormRow><FormLabel>Priority</FormLabel><InfoSlot><InfoBubble /></InfoSlot><TextInput defaultValue="0" /></FormRow>
                  <FormRow><FormLabel>Data</FormLabel><InfoSlot><InfoBubble /></InfoSlot><TextInput defaultValue="" /></FormRow>
                </RecordForm>
                <Divider />
                <ButtonRow><CreateButton type="button">create record</CreateButton></ButtonRow>
              </MainCard>
              <SearchHelp>
                <svg width="16" height="16" viewBox="0 0 16 16" fill="none" stroke="#fff" strokeWidth="1.2">
                  <circle cx="8" cy="8" r="7.3" />
                  <path d="M5.9 6.2 A2.1 2.1 0 1 1 8.8 8 C8.2 8.3 8 8.6 8 9.4" strokeWidth="1.4" />
                  <circle cx="8" cy="11.6" r=".9" fill="#fff" stroke="none" />
                </svg>
                Search Help
              </SearchHelp>
            </Page>
          </BrowserBody>
        </Browser>
      </Desktop>
    </Screen>
  )
}
